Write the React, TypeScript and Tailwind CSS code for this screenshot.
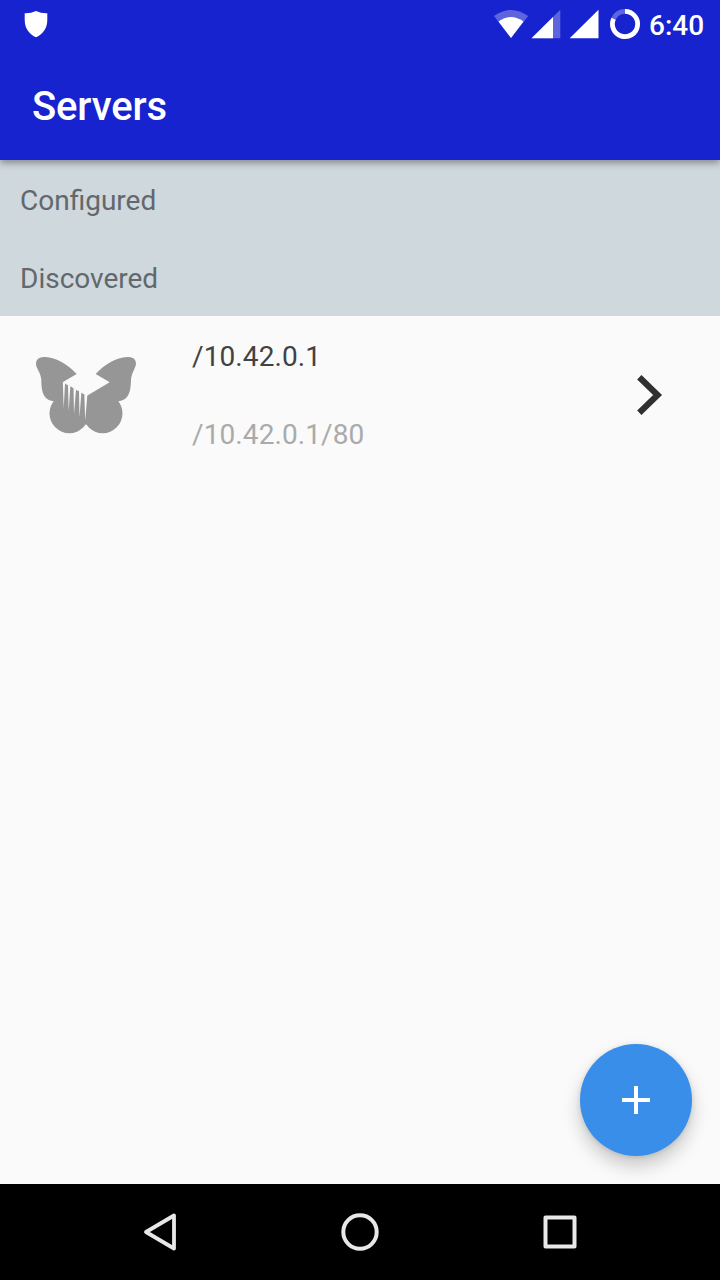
import React from "react";

function StatusBar() {
  return (
    <div className="flex h-12 items-start justify-between text-white">
      <svg className="h-12 w-[60px]" viewBox="0 0 60 48" fill="currentColor">
        <path d="M36 11Q41 13.5 47.3 13.3V20C47.3 29 42 34.8 36 37.2C30 34.8 24.7 29 24.7 20V13.3Q31 13.5 36 11Z" />
      </svg>
      <div className="flex items-start pr-4">
        <svg className="h-12 w-[156px]" viewBox="490 0 156 48" fill="currentColor">
          <path opacity="0.3" d="M494 16Q511 3.8 528.2 16L511 38Z" />
          <path d="M498.5 21.5Q511 12.5 523.5 21.5L511 38Z" />
          <path opacity="0.3" d="M531.5 38.3L560.3 9.7V38.3Z" />
          <path d="M531.5 38.3L553 17V38.3Z" />
          <path d="M569.7 38.3L598.5 9.7V38.3Z" />
          <path d="M625 11.400A12.600 12.600 0 0 0 613.600 18.700" fill="none" stroke="currentColor" strokeWidth="4.800" opacity="0.3" />
          <path d="M625 11.400A12.600 12.600 0 1 1 613.600 18.700" fill="none" stroke="currentColor" strokeWidth="4.800" />
        </svg>
        <span className="w-[58px] pl-[3px] text-[28px] leading-[52px] font-medium">6:40</span>
      </div>
    </div>
  );
}

function Butterfly() {
  return (
    <svg className="h-[110px] w-[130px]" viewBox="0 0 390 330" fill="#969696">
      <path d="M48 72C48 55 61 51 76 51C108 53 143 72 170 102L129 126L201 167L269 127L227 102C254 72 289 53 321 51C336 51 348 55 348 72C345 88 335 98 333 119C332 151 329 180 294 184L248 250L198 252L148 250L103 184C69 181 64 153 64 120C62 96 49 88 48 72Z" />
      <circle cx="148" cy="220" r="59.500" />
      <circle cx="248" cy="220" r="59.500" />
      <path
        d="M128.500 125L202 166L195.500 242L193 162L184 158L178.500 233L177 154L168 149L162 222L160.500 144L151 139L146 213L144 136L135 131L131 206Z"
        fill="#fafafa"
      />
    </svg>
  );
}

function SectionHeader({ title }: { title: string }) {
  return (
    <h2 className="h-[78px] bg-[#cfd8dd] pl-5 text-[28px] leading-[82px] text-[#62686b]">
      {title}
    </h2>
  );
}

function ServerRow({ name, address }: { name: string; address: string }) {
  return (
    <li className="flex h-[158px] items-center">
      <div className="w-[192px] pl-5">
        <Butterfly />
      </div>
      <div className="flex-1 text-[28px] tracking-[0.1px]">
        <div className="h-[78px] leading-[80px] text-[#424242]">{name}</div>
        <div className="h-[78px] leading-[80px] text-[#aaaaaa]">{address}</div>
      </div>
      <svg className="mr-12 h-[60px] w-12" viewBox="624 365 48 60" fill="none" stroke="#303030" strokeWidth="6.200">
        <path d="M639.300 377.300L657.600 395L639.300 412.700" />
      </svg>
    </li>
  );
}

function NavigationBar() {
  return (
    <nav className="flex h-24 items-center justify-between bg-black px-[132px]">
      <svg className="h-14 w-14" viewBox="132 1204 56 56" fill="none" stroke="#e8e8e8" strokeWidth="3.800" strokeLinejoin="round">
        <path d="M146 1232L174 1215.500V1248.500Z" />
      </svg>
      <svg className="h-14 w-14" viewBox="332 1204 56 56" fill="none" stroke="#e8e8e8" strokeWidth="4">
        <circle cx="360" cy="1232" r="16.700" />
      </svg>
      <svg className="h-14 w-14" viewBox="532 1204 56 56" fill="none" stroke="#e8e8e8" strokeWidth="4" strokeLinejoin="round">
        <rect x="545.500" y="1217.500" width="29" height="29" />
      </svg>
    </nav>
  );
}

export default function App() {
  return (
    <div className="flex h-[1280px] w-[720px] flex-col overflow-hidden bg-[#fafafa] font-['Roboto',sans-serif]">
      <header className="relative z-10 h-40 shrink-0 bg-[#1723cf] text-white shadow-[0_3px_7px_rgba(0,0,0,0.36)]">
        <StatusBar />
        <h1 className="h-28 pl-8 text-[40px] leading-[118px] font-medium tracking-[-0.15px]">Servers</h1>
      </header>
      <main className="relative flex-1">
        <SectionHeader title="Configured" />
        <SectionHeader title="Discovered" />
        <ul>
          <ServerRow name="/10.42.0.1" address="/10.42.0.1/80" />
        </ul>
        <button
          aria-label="Add server"
          className="absolute right-7 bottom-7 flex size-28 items-center justify-center rounded-full bg-[#388ee8] shadow-[0_10px_18px_rgba(0,0,0,0.2),0_1px_5px_rgba(0,0,0,0.12)]"
        >
          <svg className="size-7" viewBox="0 0 28 28" fill="white">
            <path d="M12 0H16V12H28V16H16V28H12V16H0V12H12Z" />
          </svg>
        </button>
      </main>
      <NavigationBar />
    </div>
  );
}
